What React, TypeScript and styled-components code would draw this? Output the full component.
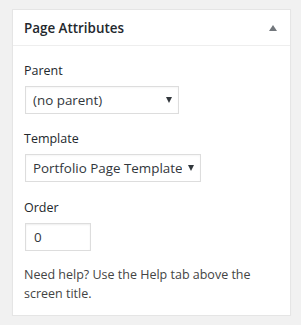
import React, { FC } from 'react';
import styled, { createGlobalStyle } from 'styled-components';

const GlobalStyle = createGlobalStyle`
  html, body {
    margin: 0;
    padding: 0;
    background: #f1f1f1;
  }
  body {
    font-family: "Open Sans", "Noto Sans", sans-serif;
    color: #23282d;
  }
`;

const Page = styled.div`
  padding: 9px 0 0 12px;
`;

const Postbox = styled.div`
  box-sizing: border-box;
  width: 279px;
  background: #fff;
  border: 1px solid #e5e5e5;
  box-shadow: 0 1px 1px rgba(0, 0, 0, 0.04);
`;

const Header = styled.div`
  display: flex;
  align-items: center;
  justify-content: space-between;
  height: 35px;
  padding: 0 13px 0 11px;
  border-bottom: 1px solid #eee;
`;

const Title = styled.h2`
  margin: 0;
  font-size: 13.4px;
  font-weight: 600;
  line-height: 20px;
  color: #23282d;
`;

const Inside = styled.div`
  padding: 16px 12px 12px 11px;
`;

const Label = styled.p<{ $gap?: number }>`
  margin: ${({ $gap = 0 }) => $gap}px 0 0;
  font-size: 12.5px;
  line-height: 18px;
  color: #23282d;
`;

const Control = styled.div<{ $width: number }>`
  position: relative;
  box-sizing: border-box;
  width: ${({ $width }) => $width}px;
  height: 28px;
  margin: 6px 0 0 1px;
`;

const Select = styled.select`
  box-sizing: border-box;
  width: 100%;
  height: 100%;
  margin: 0;
  padding: 0 18px 0 7px;
  appearance: none;
  border: 1px solid #ddd;
  border-radius: 0;
  background: #fff;
  font-family: inherit;
  font-size: 13.4px;
  color: #32373c;
  box-shadow: inset 0 1px 2px rgba(0, 0, 0, 0.04);
`;

const Arrow = styled.svg`
  position: absolute;
  right: 7px;
  top: 11px;
  pointer-events: none;
`;

const Input = styled.input`
  box-sizing: border-box;
  width: 100%;
  height: 100%;
  margin: 0;
  padding: 0 8px;
  border: 1px solid #ddd;
  font-family: inherit;
  font-size: 13.4px;
  color: #32373c;
  box-shadow: inset 0 1px 2px rgba(0, 0, 0, 0.07);
`;

const Help = styled.p`
  margin: 14px 0 0;
  font-size: 12.5px;
  line-height: 19px;
  color: #444;
`;

const DropArrow: FC = () => (
  <Arrow width="6" height="6" viewBox="0 0 6 6">
    <polygon points="0,0 6,0 3,6" fill="#32373c" />
  </Arrow>
);

const App: FC = () => {
  return (
    <>
      <GlobalStyle />
      <Page>
        <Postbox>
          <Header>
            <Title>Page Attributes</Title>
            <svg width="8" height="6" viewBox="0 0 8 6">
              <polygon points="4,0 8,6 0,6" fill="#72777c" />
            </svg>
          </Header>
          <Inside>
            <Label>Parent</Label>
            <Control $width={154}>
              <Select defaultValue="">
                <option value="">(no parent)</option>
              </Select>
              <DropArrow />
            </Control>
            <Label $gap={16}>Template</Label>
            <Control $width={176}>
              <Select defaultValue="portfolio">
                <option value="portfolio">Portfolio Page Template</option>
              </Select>
              <DropArrow />
            </Control>
            <Label $gap={17}>Order</Label>
            <Control $width={66}>
              <Input type="text" defaultValue="0" />
            </Control>
            <Help>Need help? Use the Help tab above the screen title.</Help>
          </Inside>
        </Postbox>
      </Page>
    </>
  );
};

export default App;
